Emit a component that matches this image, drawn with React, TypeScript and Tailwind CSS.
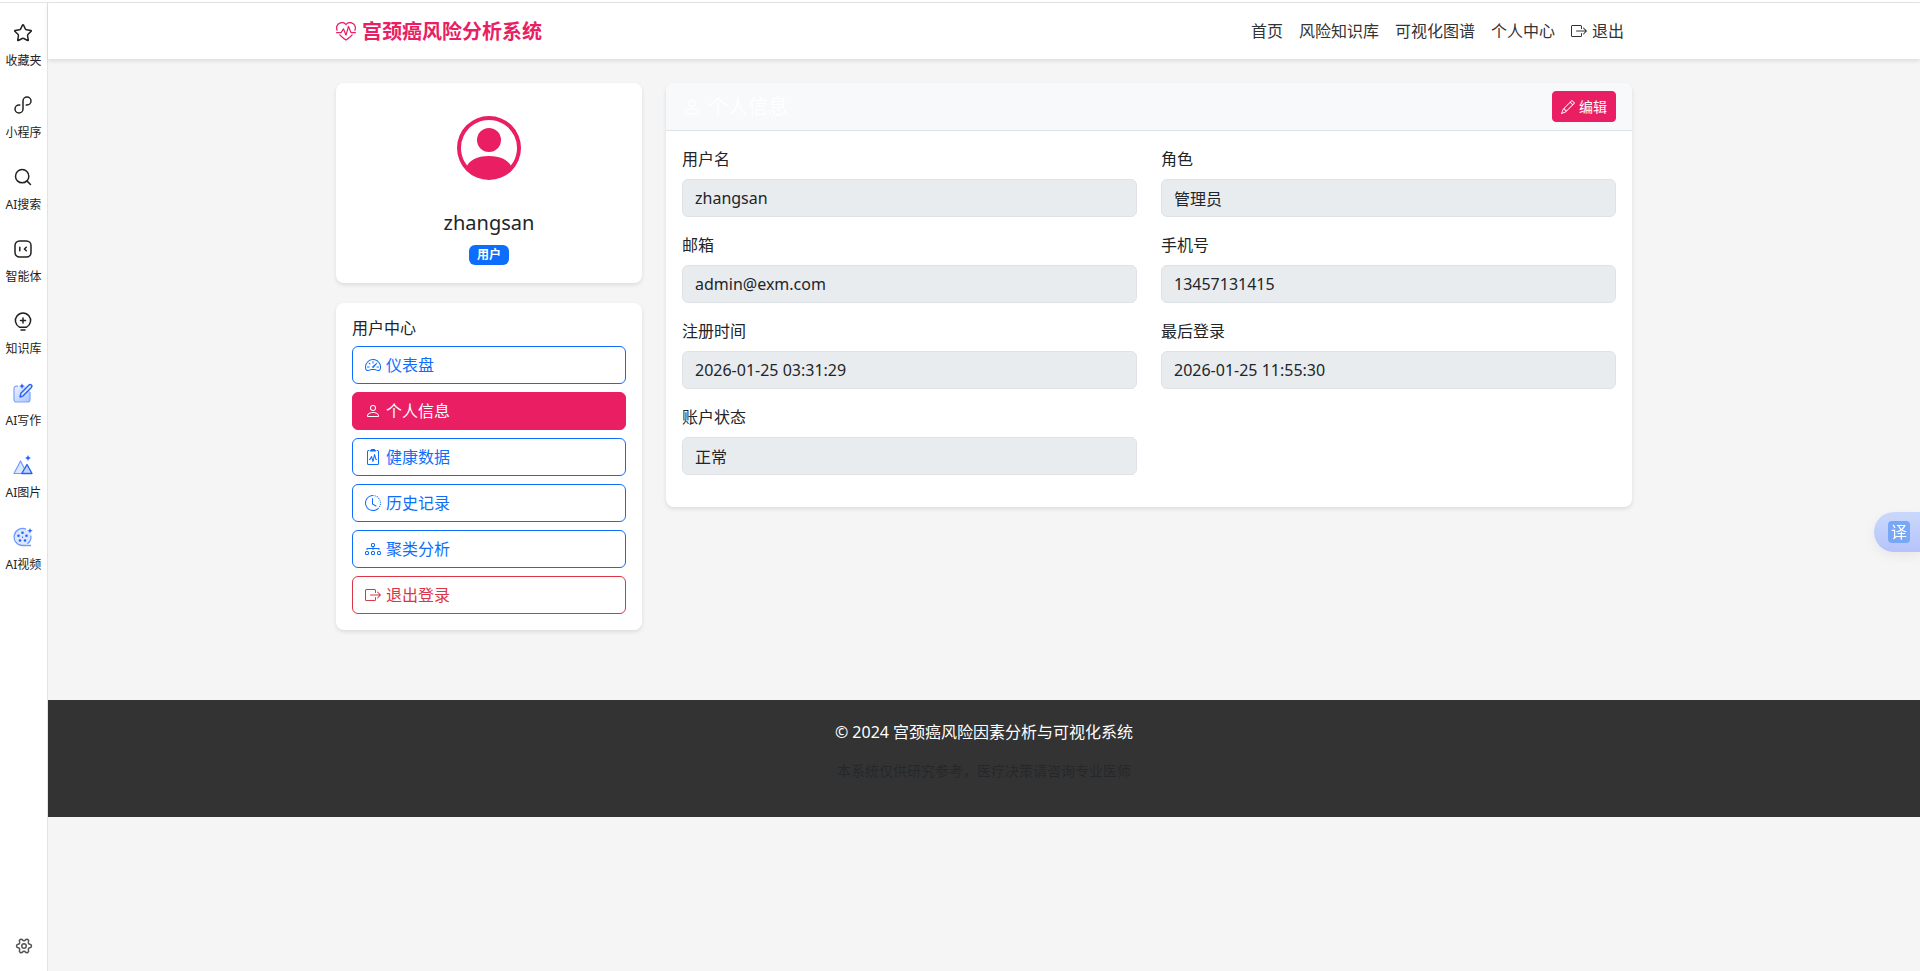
import { useState } from "react";

import type { ReactNode } from "react";

import {
  BsBoxArrowRight,
  BsClipboard2Pulse,
  BsClockHistory,
  BsDiagram3,
  BsHeartPulse,
  BsPencil,
  BsPerson,
  BsPersonCircle,
  BsSpeedometer2,
} from "react-icons/bs";

import { Search, Settings, Star } from "lucide-react";

const line = {
  fill: "none",
  stroke: "currentColor",
  strokeWidth: 1.5,
  strokeLinecap: "round" as const,
  strokeLinejoin: "round" as const,
};

function MiniAppIcon() {
  return (
    <svg width="18" height="18" viewBox="0 0 18 18" {...line}>
      <path d="M12.2 9h.8a4 4 0 1 0-4-4v8a4 4 0 1 1-4-4h.8" />
    </svg>
  );
}

function AgentIcon() {
  return (
    <svg width="18" height="18" viewBox="0 0 18 18" {...line}>
      <rect x="1" y="1" width="16" height="16" rx="4.5" />
      <path d="M5.8 7.2v3.6M12.3 7.2 10.4 9l1.9 1.8" />
    </svg>
  );
}

function KnowledgeIcon() {
  return (
    <svg width="18" height="19" viewBox="0 0 18 19" {...line}>
      <path d="M5.4 15.2a7.6 7.6 0 1 1 7.2 0z" />
      <path d="M9 6v5M6.5 8.5h5M7 18h4" />
    </svg>
  );
}

function AiWriteIcon() {
  return (
    <svg width="20" height="20" viewBox="0 0 20 20" fill="none">
      <defs>
        <linearGradient id="write" x1="0" y1="0" x2="1" y2="1">
          <stop offset="0" stopColor="#eef3ff" />
          <stop offset="1" stopColor="#a9c3ff" />
        </linearGradient>
      </defs>
      <path
        d="M6 3.2H3.5A2.5 2.5 0 0 0 1 5.7v10.8A2.5 2.5 0 0 0 3.500 19h11a2.500 2.500 0 0 0 2.500-2.500V8L12 3.200z"
        fill="url(#write)"
      />
      <path
        d="M5 3.2H3.500A2.500 2.500 0 0 0 1 5.700v10.800A2.500 2.500 0 0 0 3.500 19h11a2.500 2.500 0 0 0 2.500-2.500V9"
        stroke="#7ba3ff"
        strokeWidth="1.2"
      />
      <path
        d="m7 14 .9-3.800L16 2a1.700 1.700 0 0 1 2.400 2.400l-8.200 8.400z"
        fill="#dce7ff"
        stroke="#2563f5"
        strokeWidth="1.4"
        strokeLinejoin="round"
      />
      <path
        d="m9 .3.8 2 2 .8-2 .8-.8 2-.8-2-2-.8 2-.8z"
        fill="#2563f5"
      />
    </svg>
  );
}

function AiImageIcon() {
  return (
    <svg width="20" height="20" viewBox="0 0 20 20" fill="none">
      <path
        d="m7.500 6 6.500 12.500H1z"
        fill="#dce7ff"
        stroke="#6f9bff"
        strokeWidth="1.2"
        strokeLinejoin="round"
      />
      <path
        d="m14 9.500 5 9H8.800z"
        fill="#c4d6ff"
        stroke="#2563f5"
        strokeWidth="1.4"
        strokeLinejoin="round"
      />
      <path
        d="m15 0 .9 2.100 2.100.9-2.100.9L15 6l-.9-2.100L12 3l2.100-.9z"
        fill="#2563f5"
      />
    </svg>
  );
}

function AiVideoIcon() {
  return (
    <svg width="20" height="20" viewBox="0 0 20 20" fill="none">
      <circle cx="9.5" cy="10" r="8.5" fill="#dce7ff" />
      <path
        d="M13 2.200A8.500 8.500 0 1 0 9.500 18.500H18M17.800 8.500a8.500 8.500 0 0 1-3.500 8.300"
        stroke="#6f9bff"
        strokeWidth="1.3"
      />
      <g fill="#2563f5">
        <circle cx="9.5" cy="5.8" r="1.3" />
        <circle cx="5.5" cy="8.8" r="1.3" />
        <circle cx="7" cy="13.5" r="1.3" />
        <circle cx="12" cy="13.5" r="1.3" />
        <circle cx="13.5" cy="8.8" r="1.3" />
        <circle cx="9.5" cy="10.2" r=".7" />
        <path d="m17 1 .8 2 2 .8-2 .8-.8 2-.8-2-2-.8 2-.8z" />
      </g>
    </svg>
  );
}

const tools: { icon: ReactNode; label: string }[] = [
  { icon: <Star size={20} strokeWidth={1.8} />, label: "收藏夹" },
  { icon: <MiniAppIcon />, label: "小程序" },
  { icon: <Search size={20} strokeWidth={1.8} />, label: "AI搜索" },
  { icon: <AgentIcon />, label: "智能体" },
  { icon: <KnowledgeIcon />, label: "知识库" },
  { icon: <AiWriteIcon />, label: "AI写作" },
  { icon: <AiImageIcon />, label: "AI图片" },
  { icon: <AiVideoIcon />, label: "AI视频" },
];

const navLinks = ["首页", "风险知识库", "可视化图谱", "个人中心"];

const outline =
  "border-[#0d6efd] text-[#0d6efd] hover:bg-[#0d6efd] hover:text-white";

const active = "border-[#e91e63] bg-[#e91e63] text-white";

const danger =
  "border-[#dc3545] text-[#dc3545] hover:bg-[#dc3545] hover:text-white";

const menuItems = [
  { icon: BsSpeedometer2, label: "仪表盘", style: outline },
  { icon: BsPerson, label: "个人信息", style: active },
  { icon: BsClipboard2Pulse, label: "健康数据", style: outline },
  { icon: BsClockHistory, label: "历史记录", style: outline },
  { icon: BsDiagram3, label: "聚类分析", style: outline },
  { icon: BsBoxArrowRight, label: "退出登录", style: danger },
];

const fields = [
  { id: "username", label: "用户名", value: "zhangsan" },
  { id: "role", label: "角色", value: "管理员" },
  { id: "email", label: "邮箱", value: "admin@exm.com" },
  { id: "phone", label: "手机号", value: "13457131415" },
  { id: "created", label: "注册时间", value: "2026-01-25 03:31:29" },
  { id: "lastLogin", label: "最后登录", value: "2026-01-25 11:55:30" },
  { id: "status", label: "账户状态", value: "正常" },
];

function ToolSidebar() {
  return (
    <aside className="flex w-12 shrink-0 flex-col items-center border-r border-[#e3e3e3] bg-white pt-5 pb-4">
      <div className="flex flex-col gap-6">
        {tools.map((tool) => (
          <button
            key={tool.label}
            className="flex h-12 flex-col items-center justify-between text-xs leading-5 whitespace-nowrap text-[#222]"
          >
            <span className="flex h-5 items-center">{tool.icon}</span>
            {tool.label}
          </button>
        ))}
      </div>

      <button aria-label="设置" className="mt-auto text-[#555]">
        <Settings size={18} strokeWidth={2} className="rotate-90" />
      </button>
    </aside>
  );
}

function Navbar() {
  return (
    <header className="bg-white shadow-[0_2px_4px_rgba(0,0,0,0.1)]">
      <div className="mx-auto flex h-14 max-w-[1320px] items-center justify-between px-3">
        <a
          href="#"
          className="flex items-center gap-1.5 pt-0.5 text-xl font-bold text-[#e91e63]"
        >
          <BsHeartPulse size={20} />
          宫颈癌风险分析系统
        </a>

        <nav className="flex items-center gap-4 pr-2 text-[#333]">
          {navLinks.map((label) => (
            <a key={label} href="#">
              {label}
            </a>
          ))}
          <a href="#" className="flex items-center gap-[5px]">
            <BsBoxArrowRight size={16} />
            退出
          </a>
        </nav>
      </div>
    </header>
  );
}

function ProfileCard() {
  return (
    <section className="flex flex-col items-center rounded-lg bg-white p-4 shadow-[0_2px_4px_rgba(0,0,0,0.1)]">
      <div className="flex h-24 items-center pt-0.5 text-[#e91e63]">
        <BsPersonCircle size={64} />
      </div>
      <h5 className="mt-4 mb-2 text-xl leading-6">zhangsan</h5>
      <div className="flex h-6 items-end pb-0.5">
        <span className="rounded-md bg-[#0d6efd] px-2 py-1 text-xs leading-3 font-bold text-white">
          用户
        </span>
      </div>
    </section>
  );
}

function MenuCard() {
  return (
    <section className="rounded-lg bg-white p-4 shadow-[0_2px_4px_rgba(0,0,0,0.1)]">
      <h6 className="mb-2 leading-[19px]">用户中心</h6>
      <div className="flex flex-col gap-2">
        {menuItems.map((item) => (
          <a
            key={item.label}
            href="#"
            className={`flex items-center gap-[5px] rounded-md border px-3 py-1.5 ${item.style}`}
          >
            <item.icon size={16} />
            {item.label}
          </a>
        ))}
      </div>
    </section>
  );
}

function InfoCard() {
  const [editing, setEditing] = useState(false);

  return (
    <section className="overflow-hidden rounded-lg bg-white shadow-[0_2px_4px_rgba(0,0,0,0.1)]">
      <div className="flex items-center justify-between border-b border-[#dee2e6] bg-[#f8f9fa] px-4 py-2">
        <h5 className="flex items-center gap-1.5 text-xl leading-6 text-white">
          <BsPerson size={20} />
          个人信息
        </h5>
        <button
          onClick={() => setEditing(!editing)}
          className="flex items-center gap-1 rounded-sm border border-[#e91e63] bg-[#e91e63] px-2 py-1 text-sm leading-[21px] text-white"
        >
          <BsPencil size={14} />
          编辑
        </button>
      </div>

      <div className="grid grid-cols-1 gap-x-6 gap-y-4 p-4 pb-8 md:grid-cols-2">
        {fields.map((field) => (
          <div key={field.id}>
            <label htmlFor={field.id} className="mb-2 block">
              {field.label}
            </label>
            <input
              id={field.id}
              type="text"
              readOnly={!editing}
              defaultValue={field.value}
              className="block h-[38px] w-full rounded-md border border-[#dee2e6] bg-[#e9ecef] px-3"
            />
          </div>
        ))}
      </div>
    </section>
  );
}

export default function App() {
  return (
    <div className="flex min-h-screen flex-col bg-[#f5f5f5] font-['Noto_Sans','Noto_Sans_CJK_SC',sans-serif] text-base text-[#212529]">
      <div className="h-[3px] border-b border-[#e3e3e3] bg-white" />

      <div className="flex grow">
        <ToolSidebar />

        <div className="min-w-0 grow">
          <Navbar />

          <main className="mx-auto grid max-w-[1320px] grid-cols-1 items-start gap-6 px-3 pt-6 pb-[70px] lg:grid-cols-[306fr_966fr]">
            <div className="flex flex-col gap-5">
              <ProfileCard />
              <MenuCard />
            </div>
            <InfoCard />
          </main>

          <footer className="bg-[#333] p-5 text-center text-white">
            <p className="mb-4">© 2024 宫颈癌风险因素分析与可视化系统</p>
            <p className="mb-4 text-sm leading-[21px] text-[#212529]/75">
              本系统仅供研究参考，医疗决策请咨询专业医师
            </p>
          </footer>
        </div>
      </div>

      {/* Translate button */}
      <button className="fixed top-[512px] right-0 flex h-10 w-[46px] items-center rounded-l-full bg-linear-to-b from-[#cbd8fc] to-[#b5c3fb] pl-3.5 shadow-[0_4px_12px_rgba(0,0,0,0.06)]">
        <span className="flex size-[22px] items-center justify-center rounded bg-[#78a7f7] text-base leading-4 text-white">
          译
        </span>
      </button>
    </div>
  );
}
